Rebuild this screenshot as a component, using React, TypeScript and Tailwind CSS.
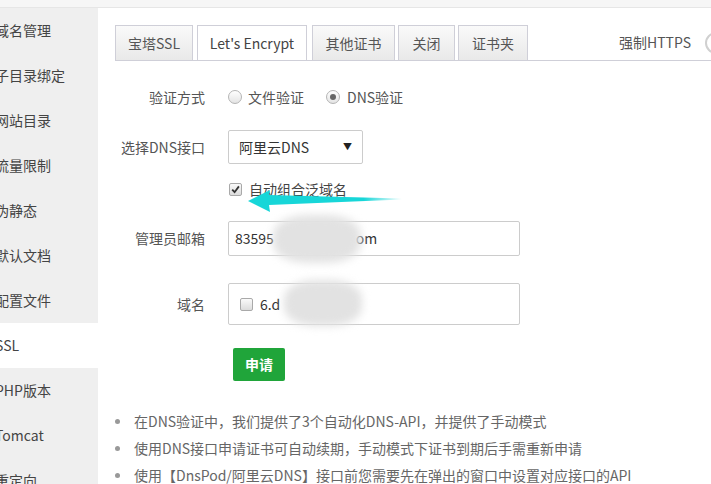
import React from 'react';

const sideItems = ['域名管理', '子目录绑定', '网站目录', '流量限制', '伪静态', '默认文档', '配置文件', 'SSL', 'PHP版本', 'Tomcat', '重定向'];

const tabs = [
  { label: '宝塔SSL', w: 'w-[78px]', mr: 'mr-[4px]' },
  { label: "Let's Encrypt", w: 'w-[110px]', mr: 'mr-[5px]', active: true },
  { label: '其他证书', w: 'w-[83px]', mr: 'mr-[3px]' },
  { label: '关闭', w: 'w-[57px]', mr: 'mr-[3px]' },
  { label: '证书夹', w: 'w-[70px]', mr: '' },
];

const tips = [
  '在DNS验证中，我们提供了3个自动化DNS-API，并提供了手动模式',
  '使用DNS接口申请证书可自动续期，手动模式下证书到期后手需重新申请',
  '使用【DnsPod/阿里云DNS】接口前您需要先在弹出的窗口中设置对应接口的API',
];

function Radio({ checked }: { checked?: boolean }) {
  return (
    <span className="flex h-[14px] w-[14px] items-center justify-center rounded-full border border-[#b4b4b4] bg-gradient-to-b from-white to-[#e4e4e4]">
      {checked && <span className="h-[6px] w-[6px] rounded-full bg-[#666]" />}
    </span>
  );
}

function Check({ checked }: { checked?: boolean }) {
  return (
    <span className="flex h-[13px] w-[13px] items-center justify-center rounded-[2px] border border-[#a9a9a9] bg-gradient-to-b from-[#fafafa] to-[#dcdcdc]">
      {checked && (
        <svg width="9" height="9" viewBox="0 0 9 9">
          <path d="M1.2 4.6 L3.6 7.2 L7.9 1.4" fill="none" stroke="#333" strokeWidth="1.8" />
        </svg>
      )}
    </span>
  );
}

function Blur({ className }: { className: string }) {
  return <div className={'pointer-events-none absolute rounded-[40%] bg-[#dedede] blur-[4px] ' + className} />;
}

export default function App() {
  return (
    <div className="relative h-[484px] w-[711px] overflow-hidden bg-white font-['Noto_Sans_CJK_SC','Noto_Sans',sans-serif] text-[14px] text-[#555]">
      <div className="h-[8px] border-b border-[#e6e6e6] bg-[#f6f6f6]" />
      <div className="flex">
        <div className="w-[98px] shrink-0 overflow-hidden bg-[#efefef]">
          {sideItems.map((s) => (
            <div
              key={s}
              className={
                'ml-[-5px] flex h-[45px] items-center whitespace-nowrap text-[#444] ' + (s === 'SSL' ? 'bg-white' : '')
              }
            >
              {s}
            </div>
          ))}
        </div>

        <div className="min-w-0 flex-1 pt-[17px]">
          {/* tabs */}
          <div className="ml-[17px] flex h-[36px] items-end border-b border-[#cfcfd8]">
            {tabs.map((t) => (
              <div
                key={t.label}
                className={
                  'flex h-[35px] shrink-0 items-center justify-center border border-b-0 border-[#cfcfd8] ' +
                  t.w +
                  ' ' +
                  t.mr +
                  ' ' +
                  (t.active ? 'bg-white text-[#444]' : 'bg-gradient-to-b from-[#fafafa] to-[#e9e9e9] text-[#555]')
                }
              >
                {t.label}
              </div>
            ))}
            <div className="ml-auto mr-[-34px] flex h-[35px] shrink-0 items-center text-[#555]">
              <span className="whitespace-nowrap">强制HTTPS</span>
              <span className="ml-[14px] h-[22px] w-[40px] shrink-0 rounded-full border-2 border-[#d0d0d0] bg-white" />
            </div>
          </div>

          {/* 验证方式 */}
          <div className="mt-[19px] flex h-[34px] items-center">
            <div className="w-[107px] text-right">验证方式</div>
            <div className="ml-[23px] flex items-center">
              <Radio />
              <span className="ml-[6px]">文件验证</span>
              <span className="ml-[22px]">
                <Radio checked />
              </span>
              <span className="ml-[7px]">DNS验证</span>
            </div>
          </div>

          {/* DNS接口 */}
          <div className="mt-[16px] flex h-[34px] items-center">
            <div className="w-[107px] text-right">选择DNS接口</div>
            <div className="ml-[23px] flex h-[34px] w-[135px] items-center justify-between rounded-[2px] border border-[#cccccc] pl-[10px] pr-[10px] text-[#333]">
              <span>阿里云DNS</span>
              <span className="text-[9px] text-[#222]">▼</span>
            </div>
          </div>

          {/* 自动组合泛域名 */}
          <div className="relative mt-[14px] flex h-[22px] items-center">
            <div className="ml-[131px] flex items-center">
              <Check checked />
              <span className="ml-[7px] text-[#444]">自动组合泛域名</span>
            </div>
            <svg className="absolute left-[150px] top-[12px]" width="156" height="24" viewBox="0 0 156 24">
              <defs>
                <linearGradient id="ag" x1="0" x2="1" y1="0" y2="0">
                  <stop offset="0" stopColor="#17d6d8" />
                  <stop offset="0.75" stopColor="#17d6d8" />
                  <stop offset="1" stopColor="#17d6d8" stopOpacity="0" />
                </linearGradient>
              </defs>
              <path d="M0 11 L22 0 L21 5 L154 8.5 L154 9.5 L21 15 L22 22 Z" fill="url(#ag)" />
            </svg>
          </div>

          {/* 管理员邮箱 */}
          <div className="mt-[21px] flex h-[35px] items-center">
            <div className="w-[107px] text-right">管理员邮箱</div>
            <div className="relative ml-[23px] flex h-[35px] w-[292px] items-center rounded-[2px] border border-[#cccccc] pl-[6px] text-[#333]">
              <span>83595</span>
              <span className="ml-[82px]">om</span>
              <Blur className="left-[44px] top-[-7px] h-[48px] w-[88px] bg-[#e2e2e2]" />
            </div>
          </div>

          {/* 域名 */}
          <div className="mt-[27px] flex h-[42px] items-center">
            <div className="w-[107px] text-right">域名</div>
            <div className="relative ml-[23px] flex h-[42px] w-[292px] items-center rounded-[2px] border border-[#cccccc] pl-[11px] text-[#333]">
              <Check />
              <span className="ml-[7px]">6.d</span>
              <Blur className="left-[55px] top-[-4px] h-[46px] w-[78px] bg-[#e2e2e2]" />
            </div>
          </div>

          {/* 申请 */}
          <button className="ml-[135px] mt-[23px] flex h-[33px] w-[52px] items-center justify-center rounded-[2px] bg-[#20a53a] font-bold text-white">
            申请
          </button>

          {/* tips */}
          <ul className="mt-[27px] ml-[17px] text-[#666]">
            {tips.map((t) => (
              <li key={t} className="flex h-[27px] items-center whitespace-nowrap">
                <span className="mr-[14px] h-[5px] w-[5px] shrink-0 rounded-full bg-[#999]" />
                {t}
              </li>
            ))}
          </ul>
        </div>
      </div>
    </div>
  );
}
